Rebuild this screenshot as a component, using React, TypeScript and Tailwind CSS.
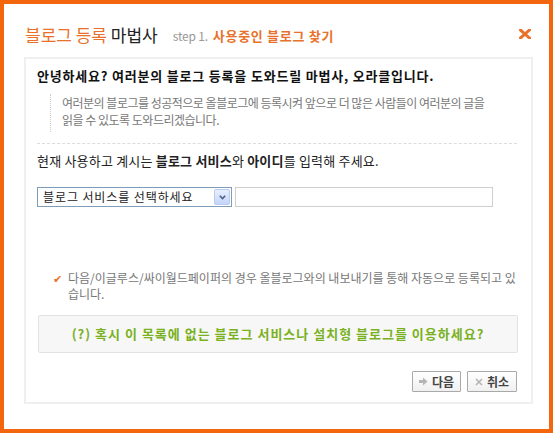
import React from "react";

const font = "font-['Noto_Sans_CJK_KR','Noto_Sans',sans-serif]";

function ArrowIcon() {
  return (
    <svg width="9" height="9" viewBox="0 0 9 9" className="shrink-0">
      <path d="M0 3h4V0.5L8.5 4.5 4 8.5V6H0z" fill="#b5b5b5" />
    </svg>
  );
}

function CrossIcon() {
  return (
    <svg width="8" height="8" viewBox="0 0 8 8" className="shrink-0">
      <path d="M1 1l6 6M7 1L1 7" stroke="#b5b5b5" strokeWidth="1.6" />
    </svg>
  );
}

export default function App() {
  return (
    <div className={`w-[557px] h-[438px] bg-white ${font}`}>
      <div className="w-[553px] h-[433px] border-4 border-[#f4660d] bg-white flex flex-col">
        {/* Header */}
        <div className="h-[53px] pt-[8px] pl-[21px] pr-[18px] flex items-center">
          <h1 className="text-[17px] leading-none">
            <span className="text-[#e8722c]">블로그 등록</span>{" "}
            <span className="text-[#222]">마법사</span>
          </h1>
          <span className="ml-[15px] mt-[3px] text-[12px] text-[#999] tracking-[-0.2px]">step 1.</span>
          <span className="ml-[5px] mt-[3px] text-[13px] font-bold text-[#e8722c] tracking-[0.7px]">
            사용중인 블로그 찾기
          </span>
          <svg width="12" height="10" viewBox="0 0 12 10" className="ml-auto mb-[1px]">
            <path d="M1.5 1l9 8M10.5 1l-9 8" stroke="#e8722c" strokeWidth="3" strokeLinecap="square" />
          </svg>
        </div>

        {/* Panel */}
        <div className="ml-[20px] w-[509px] h-[347px] border-2 border-[#efefef] pl-[11px] pr-[14px] flex flex-col">
          <p className="mt-[8px] text-[13px] font-bold leading-[18px] text-[#111] tracking-[0.8px] whitespace-nowrap">
            안녕하세요? 여러분의 블로그 등록을 도와드릴 마법사, 오라클입니다.
          </p>
          <div className="mt-[9px] ml-[13px] border-l border-dotted border-[#cfcfcf] pl-[11px] pb-[4px] text-[12px] leading-[17px] text-[#777] tracking-[-0.5px] whitespace-nowrap">
            여러분의 블로그를 성공적으로 올블로그에 등록시켜 앞으로 더 많은 사람들이 여러분의 글을
            <br />
            읽을 수 있도록 도와드리겠습니다.
          </div>
          <div className="mt-[11px] border-t border-dashed border-[#dcdcdc]" />
          <p className="mt-[8px] text-[13px] leading-[18px] text-[#222] tracking-[0.2px]">
            현재 사용하고 계시는 <b>블로그 서비스</b>와 <b>아이디</b>를 입력해 주세요.
          </p>

          <div className="mt-[17px] flex items-center gap-[3px]">
            <div className="w-[195px] h-[20px] border border-[#7f9db9] bg-white flex items-center pl-[5px] pr-[1px]">
              <span className="flex-1 text-[12px] text-[#222] leading-none tracking-[0.9px]">
                블로그 서비스를 선택하세요
              </span>
              <div className="w-[16px] h-[16px] rounded-[2px] border border-[#b9cbee] bg-gradient-to-b from-[#e8eefd] to-[#c4d5fa] flex items-center justify-center">
                <svg width="7" height="5" viewBox="0 0 7 5">
                  <path d="M0.8 0.8L3.5 3.6 6.2 0.8" stroke="#4d6185" strokeWidth="1.6" fill="none" />
                </svg>
              </div>
            </div>
            <div className="w-[258px] h-[20px] border border-[#cfcfcf] bg-white" />
          </div>

          <div className="mt-[63px] ml-[16px] flex text-[12px] leading-[16px] text-[#777]">
            <span className="w-[15px] shrink-0 text-[#e8722c] text-[11px]">✔</span>
            <p className="whitespace-nowrap">
              다음/이글루스/싸이월드페이퍼의 경우 올블로그와의 내보내기를 통해 자동으로 등록되고 있
              <br />
              습니다.
            </p>
          </div>

          <div className="mt-[13px] ml-[1px] w-[480px] h-[38px] rounded-[2px] border border-[#e2e2e2] bg-[#f7f7f7] flex items-center justify-center">
            <span className="text-[13px] font-bold text-[#7ab11e] tracking-[1px]">
              (?) 혹시 이 목록에 없는 블로그 서비스나 설치형 블로그를 이용하세요?
            </span>
          </div>

          <div className="mt-[18px] flex justify-end gap-[6px]">
            <button className="w-[49px] h-[21px] border border-[#a9a9a9] rounded-[1px] bg-gradient-to-b from-white to-[#f0f0f0] flex items-center justify-center gap-[4px] text-[12px] font-bold text-[#444]">
              <ArrowIcon />
              다음
            </button>
            <button className="w-[50px] h-[21px] border border-[#a9a9a9] rounded-[1px] bg-gradient-to-b from-white to-[#f0f0f0] flex items-center justify-center gap-[4px] text-[12px] font-bold text-[#444]">
              <CrossIcon />
              취소
            </button>
          </div>
        </div>
      </div>
    </div>
  );
}
